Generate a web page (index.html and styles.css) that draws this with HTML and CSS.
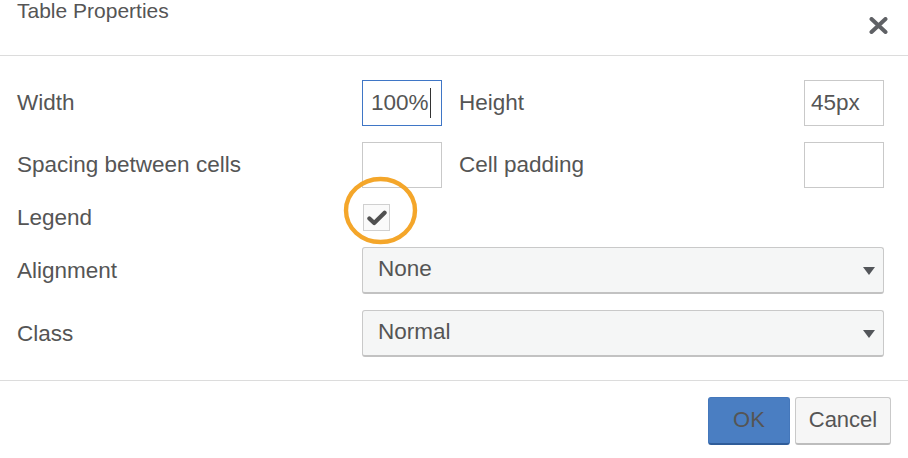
FILE: index.html
```html
<!DOCTYPE html>
<html lang="en">
<head>
<meta charset="utf-8">
<title>Table Properties</title>
<link rel="stylesheet" href="styles.css">
</head>
<body>
<div class="dialog">
  <div class="header">
    <div class="title">Table Properties</div>
    <button class="close" aria-label="Close">
      <svg width="19" height="17" viewBox="0 0 19 17"><path d="M2.5 2 L16.5 15 M16.5 2 L2.5 15" stroke="#5f6165" stroke-width="4" stroke-linecap="round" fill="none"/></svg>
    </button>
  </div>
  <div class="body">
    <div class="label">Width</div>
    <div class="field focused">100%<span class="caret"></span></div>
    <div class="label second">Height</div>
    <div class="field">45px</div>

    <div class="label">Spacing between cells</div>
    <div class="field"></div>
    <div class="label second">Cell padding</div>
    <div class="field"></div>

    <div class="label">Legend</div>
    <div class="check-cell">
      <div class="checkbox">
        <svg width="20" height="16" viewBox="0 0 20 16"><path d="M2.4 8.4 L7.2 13 L17.6 2.8" stroke="#505050" stroke-width="4.2" stroke-linecap="round" stroke-linejoin="round" fill="none"/></svg>
      </div>
      <svg class="highlight" width="75" height="69" viewBox="0 0 75 69"><ellipse cx="37.5" cy="34.5" rx="34.5" ry="31.5" stroke="#f4a62a" stroke-width="4.4" fill="none"/></svg>
    </div>

    <div class="label">Alignment</div>
    <div class="select"><span>None</span><span class="arrow"></span></div>

    <div class="label">Class</div>
    <div class="select"><span>Normal</span><span class="arrow"></span></div>
  </div>
  <div class="footer">
    <button class="btn primary">OK</button>
    <button class="btn">Cancel</button>
  </div>
</div>
</body>
</html>
```
FILE: styles.css
```css
* { box-sizing: border-box; }
html, body {
  margin: 0;
  padding: 0;
  background: #fff;
}
body {
  font-family: "Liberation Sans", Arial, Helvetica, sans-serif;
  color: #555;
  width: 908px;
  height: 458px;
  overflow: hidden;
}
.dialog {
  width: 908px;
  height: 458px;
  display: flex;
  flex-direction: column;
}
.header {
  height: 56px;
  border-bottom: 1px solid #dcdcdc;
  display: flex;
  justify-content: space-between;
  align-items: flex-start;
  padding: 0 20px 0 17px;
}
.title {
  font-size: 21px;
  line-height: 22px;
  color: #555;
}
.close {
  margin-top: 17px;
  padding: 0;
  border: 0;
  background: none;
  width: 19px;
  height: 17px;
  display: flex;
}
.body {
  display: grid;
  grid-template-columns: 345px 80px 1fr 80px;
  grid-template-rows: 46px 46px 27px 47px 47px;
  row-gap: 16px;
  padding: 24px 24px 23px 17px;
  align-items: center;
}
.label {
  font-size: 22.5px;
  line-height: 26px;
  color: #555;
}
.label.second { padding-left: 17px; }
.field {
  height: 46px;
  border: 1px solid #c9c9c9;
  background: #fff;
  font-size: 22.5px;
  display: flex;
  align-items: center;
  padding: 0 0 0 6px;
  color: #555;
}
.field.focused {
  border-color: #3f76c6;
  padding-left: 8px;
}
.caret {
  display: inline-block;
  width: 1px;
  height: 30px;
  background: #333;
  margin-left: 1px;
}
.check-cell {
  grid-column: 2 / 5;
  position: relative;
  height: 27px;
  padding-left: 1px;
}
.checkbox {
  width: 27px;
  height: 27px;
  border: 1px solid #d0d0d0;
  background: #fafafa;
  display: flex;
  align-items: center;
  justify-content: center;
  padding-left: 1px;
}
.highlight {
  position: absolute;
  left: -19px;
  top: -28px;
}
.select {
  grid-column: 2 / 5;
  height: 47px;
  border: 1px solid #c9c9c9;
  border-bottom: 2px solid #c2c2c2;
  border-radius: 3px;
  background: #f5f6f6;
  display: flex;
  align-items: center;
  justify-content: space-between;
  padding: 0 8px 3px 15px;
  font-size: 22.5px;
  color: #555;
}
.arrow {
  width: 0;
  height: 0;
  border-left: 6px solid transparent;
  border-right: 6px solid transparent;
  border-top: 8px solid #53565a;
  margin-top: 5px;
}
.footer {
  border-top: 1px solid #dcdcdc;
  padding: 16px 17px 0 0;
  display: flex;
  justify-content: flex-end;
  gap: 5px;
}
.btn {
  height: 48px;
  font-family: "Liberation Sans", Arial, Helvetica, sans-serif;
  font-size: 22px;
  color: #555;
  border: 1px solid #c9c9c9;
  border-bottom: 2px solid #bdbdbd;
  border-radius: 3px;
  background: #f6f6f6;
  width: 96px;
  padding: 0 0 2px 0;
}
.btn.primary {
  width: 82px;
  background: #4a7ec2;
  border-color: #4477bb;
  border-bottom-color: #2f5c99;
  color: #555;
}
```
